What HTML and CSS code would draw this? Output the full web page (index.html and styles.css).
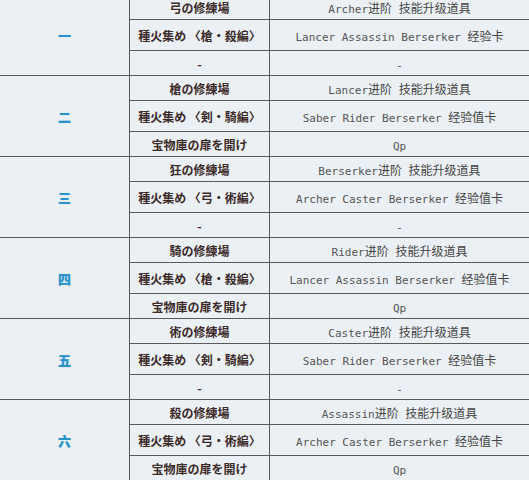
FILE: index.html
```html
<!DOCTYPE html>
<html lang="zh">
<head>
<meta charset="utf-8">
<link rel="stylesheet" href="styles.css">
</head>
<body>
<table class="quests">
  <tbody>
    <tr class="r-short"><td class="day" rowspan="3">一</td><td class="quest">弓の修練場</td><td class="reward"><span class="en">Archer</span>进阶<span class="gap"> </span>技能升级道具</td></tr>
    <tr class="r-tall"><td class="quest">種火集め 〈槍・殺編〉</td><td class="reward"><span class="en">Lancer Assassin Berserker </span>经验卡</td></tr>
    <tr class="r-short end"><td class="quest">-</td><td class="reward"><span class="en">-</span></td></tr>

    <tr class="r-short"><td class="day" rowspan="3">二</td><td class="quest">槍の修練場</td><td class="reward"><span class="en">Lancer</span>进阶<span class="gap"> </span>技能升级道具</td></tr>
    <tr class="r-tall"><td class="quest">種火集め 〈剣・騎編〉</td><td class="reward"><span class="en">Saber Rider Berserker </span>经验值卡</td></tr>
    <tr class="r-short end"><td class="quest">宝物庫の扉を開け</td><td class="reward"><span class="en">Qp</span></td></tr>

    <tr class="r-short"><td class="day" rowspan="3">三</td><td class="quest">狂の修練場</td><td class="reward"><span class="en">Berserker</span>进阶<span class="gap"> </span>技能升级道具</td></tr>
    <tr class="r-tall"><td class="quest">種火集め 〈弓・術編〉</td><td class="reward"><span class="en">Archer Caster Berserker </span>经验值卡</td></tr>
    <tr class="r-short end"><td class="quest">-</td><td class="reward"><span class="en">-</span></td></tr>

    <tr class="r-short"><td class="day" rowspan="3">四</td><td class="quest">騎の修練場</td><td class="reward"><span class="en">Rider</span>进阶<span class="gap"> </span>技能升级道具</td></tr>
    <tr class="r-tall"><td class="quest">種火集め 〈槍・殺編〉</td><td class="reward"><span class="en">Lancer Assassin Berserker </span>经验值卡</td></tr>
    <tr class="r-short end"><td class="quest">宝物庫の扉を開け</td><td class="reward"><span class="en">Qp</span></td></tr>

    <tr class="r-short"><td class="day" rowspan="3">五</td><td class="quest">術の修練場</td><td class="reward"><span class="en">Caster</span>进阶<span class="gap"> </span>技能升级道具</td></tr>
    <tr class="r-tall"><td class="quest">種火集め 〈剣・騎編〉</td><td class="reward"><span class="en">Saber Rider Berserker </span>经验值卡</td></tr>
    <tr class="r-short end"><td class="quest">-</td><td class="reward"><span class="en">-</span></td></tr>

    <tr class="r-short"><td class="day" rowspan="3">六</td><td class="quest">殺の修練場</td><td class="reward"><span class="en">Assassin</span>进阶<span class="gap"> </span>技能升级道具</td></tr>
    <tr class="r-tall"><td class="quest">種火集め 〈弓・術編〉</td><td class="reward"><span class="en">Archer Caster Berserker </span>经验值卡</td></tr>
    <tr class="r-short end"><td class="quest">宝物庫の扉を開け</td><td class="reward"><span class="en">Qp</span></td></tr>
  </tbody>
</table>
</body>
</html>
```
FILE: styles.css
```css
html, body {
  margin: 0;
  padding: 0;
  background: #ebf0f4;
  overflow: hidden;
}

.quests {
  border-collapse: separate;
  border-spacing: 0;
  width: 529px;
  table-layout: fixed;
  margin-top: -5px;
}

.quests td {
  padding: 0;
  text-align: center;
  vertical-align: middle;
  border-bottom: 1px solid #5a5a5a;
  box-sizing: border-box;
}

.r-short td { height: 25px; }
.r-tall td { height: 31px; }

.day {
  width: 130px;
  border-right: 1px solid #5a5a5a;
  font-family: "Noto Sans CJK JP", sans-serif;
  font-weight: 900;
  font-size: 13px;
  color: #2a92c8;
  text-shadow: 0 0 1px rgba(42, 146, 200, 0.3);
}

.quest {
  width: 140px;
  border-right: 1px solid #5a5a5a;
  font-family: "Noto Sans CJK JP", sans-serif;
  font-weight: 700;
  font-size: 12px;
  color: #3b2a28;
  white-space: nowrap;
}

.reward {
  font-family: "Noto Sans CJK SC", sans-serif;
  font-size: 12px;
  color: #444;
  white-space: nowrap;
}

.reward .en {
  font-family: "DejaVu Sans Mono", monospace;
  font-size: 11px;
  color: #555;
  white-space: pre;
}

.reward .gap {
  font-family: "DejaVu Sans Mono", monospace;
  font-size: 11px;
  white-space: pre;
}
```
